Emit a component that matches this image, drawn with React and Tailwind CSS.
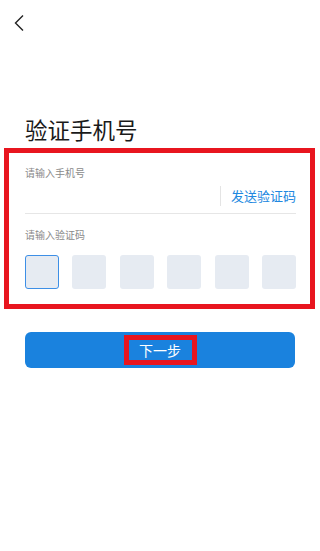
export default function App() {
  const boxes = [0, 1, 2, 3, 4, 5];
  return (
    <div className="w-[320px] h-[551px] bg-white overflow-hidden" style={{ fontFamily: '"Noto Sans CJK SC", "Noto Sans", sans-serif' }}>
      <div className="h-[46px] pl-[13px] pt-[14px]">
        <svg width="12" height="18" viewBox="0 0 12 18" fill="none">
          <path d="M10 1.5 L2.5 9 L10 16.5" stroke="#222" strokeWidth="1.4" />
        </svg>
      </div>
      <h1 className="mt-[68px] ml-[25px] text-[22.5px] leading-[30px] text-[#1a1a1a]">验证手机号</h1>
      <div className="mt-[4px] mx-[4px] w-[311px] border-[5px] border-[#e8151f] pl-[16px] pr-[14px] pt-[12px] pb-[15px]">
        <div className="text-[10px] leading-[16px] text-[#8a8a8a]">请输入手机号</div>
        <div className="flex items-center justify-end h-[24px] mt-[3px]">
          <div className="w-px h-[20px] bg-[#e4e4e4] mr-[10px]" />
          <span className="text-[13px] leading-[20px] text-[#2187e0]">发送验证码</span>
        </div>
        <div className="h-px bg-[#e6e6e6] mt-[5px]" />
        <div className="text-[10px] leading-[16px] text-[#8a8a8a] mt-[13px]">请输入验证码</div>
        <div className="flex justify-between mt-[12px]">
          {boxes.map((i) => (
            <div
              key={i}
              className={
                i === 0
                  ? "w-[34px] h-[34px] rounded-[3px] bg-[#e6ebf2] border border-[#3d8fe6]"
                  : "w-[34px] h-[34px] rounded-[3px] bg-[#e6ebf2]"
              }
            />
          ))}
        </div>
      </div>
      <div className="mt-[23px] mx-[25px] h-[36px] rounded-[6px] bg-[#1a82de] flex items-center justify-center">
        <div className="w-[73px] h-[30px] border-[5px] border-[#e8151f] flex items-center justify-center">
          <span className="text-[14px] leading-[18px] text-white">下一步</span>
        </div>
      </div>
    </div>
  );
}
